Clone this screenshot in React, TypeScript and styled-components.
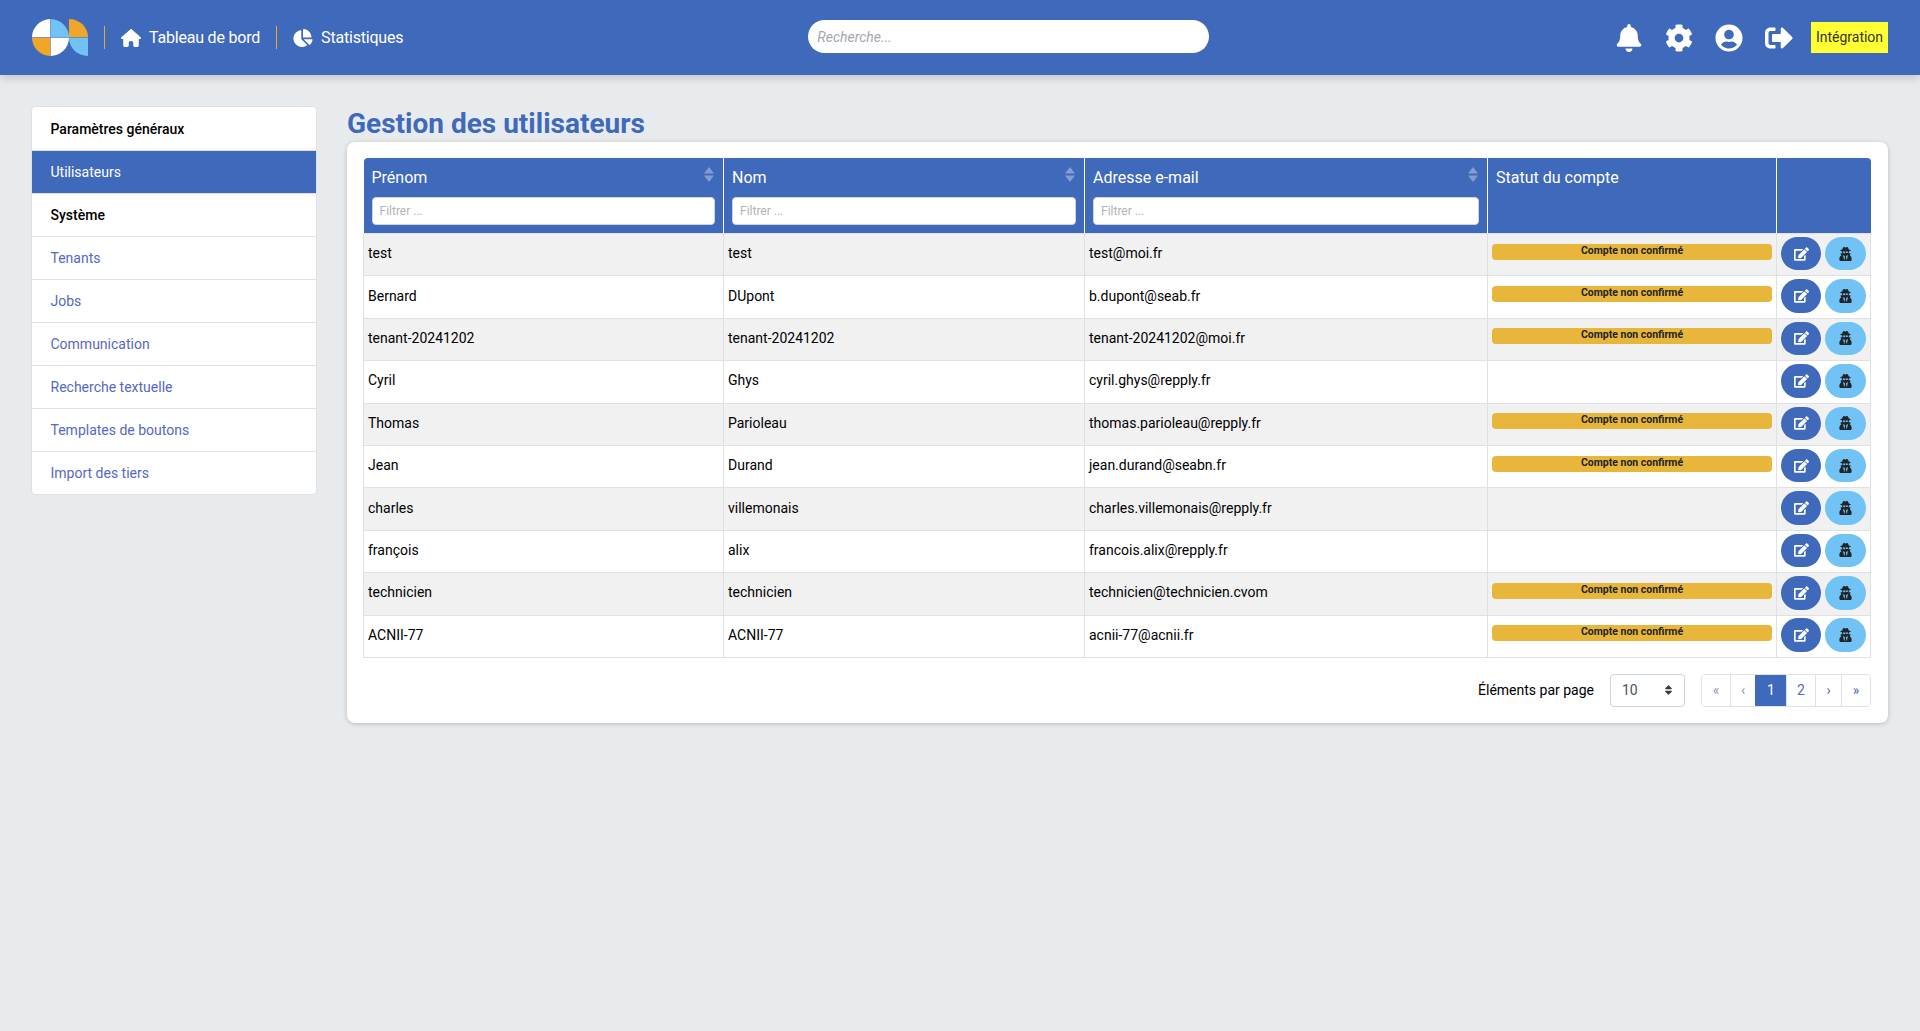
import React from "react";
import styled, { createGlobalStyle } from "styled-components";
import {
  FaChartPie,
  FaBell,
  FaCog,
  FaUserCircle,
  FaSignOutAlt,
  FaEdit,
  FaUserSecret,
  FaSort,
} from "react-icons/fa";
import { FaHouse } from "react-icons/fa6";

const BLUE = "#3f69ba";
const LIGHT_BLUE = "#72c3f5";
const ORANGE = "#f0a728";
const LINE = "#dee2e6";

const GlobalStyle = createGlobalStyle`
  html, body {
    margin: 0;
    padding: 0;
    background: #e8ebee;
    font-family: Roboto, "Liberation Sans", sans-serif;
    font-size: 14px;
    color: #000;
  }
  * { box-sizing: border-box; }
`;

const Page = styled.div`
  min-height: 100vh;
`;

const Header = styled.header`
  height: 75px;
  background: ${BLUE};
  box-shadow: 0 3px 8px rgba(0, 0, 0, 0.16);
  display: flex;
  align-items: center;
  padding: 0 32px;
`;

const Nav = styled.nav`
  display: flex;
  align-items: center;
  margin-left: 16px;
`;

const NavLink = styled.a`
  display: flex;
  align-items: center;
  gap: 8px;
  height: 23px;
  padding: 0 16px;
  border-left: 1px solid ${ORANGE};
  color: #fff;
  font-size: 16px;
  letter-spacing: -0.2px;
  svg {
    width: 20px;
    height: 18px;
    flex: none;
  }
`;

const Search = styled.input`
  width: 401px;
  height: 33px;
  margin-left: 389px;
  margin-top: -2px;
  border: none;
  border-radius: 17px;
  padding: 0 9px;
  background: #fff;
  font-family: inherit;
  font-size: 14px;
  font-style: italic;
  &::placeholder {
    color: #a3a8ae;
    opacity: 1;
  }
`;

const HeaderRight = styled.div`
  margin-left: auto;
  display: flex;
  align-items: center;
  color: #fff;
  svg {
    width: 28px;
    height: 28px;
    margin-right: 22px;
  }
`;

const EnvTag = styled.div`
  width: 77px;
  height: 31px;
  margin-left: -4px;
  margin-top: -1px;
  background: #ffff33;
  color: #333;
  font-size: 14px;
  display: flex;
  align-items: center;
  justify-content: center;
`;

const Main = styled.main`
  display: grid;
  grid-template-columns: 284px 1fr;
  gap: 31px;
  padding: 32px;
  align-items: start;
`;

const Side = styled.aside`
  background: #fff;
  border-radius: 4px;
  box-shadow: 0 0 0 1px #dfe2e5;
`;

const SideItem = styled.div<{ $kind: "title" | "active" | "link" }>`
  height: 43px;
  display: flex;
  align-items: center;
  padding-left: 18.5px;
  font-size: 14px;
  font-weight: ${(p) => (p.$kind === "title" ? 500 : 400)};
  color: ${(p) =>
    p.$kind === "title" ? "#000" : p.$kind === "active" ? "#fff" : "#5568c4"};
  background: ${(p) => (p.$kind === "active" ? BLUE : "transparent")};
  & + & {
    border-top: ${(p) =>
      p.$kind === "link" ? `1px solid ${LINE}` : "none"};
  }
`;

const Title = styled.h1`
  margin: 0 0 3px;
  height: 32px;
  padding-top: 2px;
  font-size: 28px;
  line-height: 30px;
  font-weight: 700;
  color: ${BLUE};
`;

const Card = styled.section`
  background: #fff;
  border-radius: 8px;
  padding: 16px;
  height: 581px;
  box-shadow: 0 1px 5px rgba(0, 0, 0, 0.2);
`;

const Table = styled.table`
  width: 1507px;
  table-layout: fixed;
  border-collapse: collapse;
`;

const Th = styled.th`
  height: 75px;
  background: ${BLUE};
  color: #fff;
  padding: 8px;
  vertical-align: top;
  text-align: left;
  font-size: 16px;
  font-weight: 400;
  border-left: 1px solid #fff;
  &:first-child {
    border-left: none;
    border-top-left-radius: 4px;
  }
  &:last-child {
    border-top-right-radius: 4px;
  }
`;

const ThHead = styled.div`
  display: flex;
  justify-content: space-between;
  height: 31px;
  line-height: 17px;
  padding-top: 3px;
`;

const Sorter = styled.svg`
  width: 10px;
  height: 15px;
  opacity: 0.35;
  margin: -2px 1px 0 0;
`;

const Filter = styled.input`
  display: block;
  width: 100%;
  height: 28px;
  border: 1px solid #ced4da;
  border-radius: 4px;
  padding: 0 7px;
  background: #fff;
  font-family: inherit;
  font-size: 12px;
  &::placeholder {
    color: #b0b5ba;
    opacity: 1;
  }
`;

const Row = styled.tr`
  height: 42.4px;
  &:nth-child(odd) {
    background: #f1f1f2;
  }
`;

const Td = styled.td`
  border: 1px solid ${LINE};
  padding: 0 4px 3px;
  font-size: 14px;
  vertical-align: middle;
  overflow: hidden;
  white-space: nowrap;
`;

const ActionTd = styled(Td)`
  padding: 0 3px 2px 4px;
`;

const Badge = styled.div`
  height: 16px;
  border-radius: 4px;
  background: #e8b63a;
  color: #212529;
  font-size: 10.5px;
  font-weight: 700;
  line-height: 13px;
  text-align: center;
  margin-bottom: 3px;
`;

const Actions = styled.div`
  display: flex;
  gap: 4px;
`;

const RoundButton = styled.button<{ $light?: boolean }>`
  width: ${(p) => (p.$light ? 41 : 40)}px;
  height: 33.5px;
  flex: none;
  border: none;
  border-radius: 17px;
  padding: 0;
  display: flex;
  align-items: center;
  justify-content: center;
  background: ${(p) => (p.$light ? LIGHT_BLUE : BLUE)};
  color: ${(p) => (p.$light ? "#212529" : "#fff")};
  svg {
    width: 15px;
    height: 14px;
  }
`;

const TableFoot = styled.div`
  width: 1508px;
  display: flex;
  justify-content: flex-end;
  align-items: center;
  margin-top: 16px;
`;

const FootLabel = styled.span`
  font-size: 14px;
  margin-right: 16px;
`;

const PageSize = styled.div`
  width: 75px;
  height: 33px;
  border: 1px solid #ced4da;
  border-radius: 4px;
  display: flex;
  align-items: center;
  justify-content: space-between;
  padding: 0 11px;
  color: #495057;
  font-size: 14px;
  margin-right: 16px;
  svg {
    width: 9px;
    height: 12px;
    color: #343a40;
  }
`;

const Pager = styled.div`
  display: flex;
  height: 33px;
  border: 1px solid ${LINE};
  border-radius: 4px;
  overflow: hidden;
`;

const PagerItem = styled.a<{ $w: number; $active?: boolean; $dim?: boolean }>`
  width: ${(p) => p.$w}px;
  display: flex;
  align-items: center;
  justify-content: center;
  font-size: 14px;
  border-left: 1px solid ${(p) => (p.$active ? BLUE : LINE)};
  background: ${(p) => (p.$active ? BLUE : "#fff")};
  color: ${(p) => (p.$active ? "#fff" : p.$dim ? "#8c96b8" : "#5568c4")};
  &:first-child {
    border-left: none;
  }
`;

const Logo = () => (
  <svg width="56" height="37" viewBox="0 0 56 37" style={{ flex: "none" }}>
    <path d="M18.300 18.300V0A18.500 18.500 0 0 0 0 18.300Z" fill="#fff" />
    <path d="M18.700 18.300V0A18.500 18.500 0 0 1 37 18.300Z" fill={LIGHT_BLUE} />
    <path d="M18.300 18.700V37A18.500 18.500 0 0 1 0 18.700Z" fill={ORANGE} />
    <path d="M18.700 18.700V37A18.500 18.500 0 0 0 37 18.700Z" fill="#fff" />
    <path d="M37 0A19 18.300 0 0 1 56 18.300H37Z" fill={ORANGE} />
    <path d="M37 18.700H56V37A19 18.300 0 0 1 37 18.700Z" fill={LIGHT_BLUE} />
  </svg>
);

const SortArrows = () => (
  <Sorter viewBox="0 0 10 15">
    <path d="M5 0L10 6.500H0Z" fill="#fff" />
    <path d="M5 15L0 8.500H10Z" fill="#fff" />
  </Sorter>
);

type User = { first: string; last: string; mail: string; pending: boolean };

const users: User[] = [
  { first: "test", last: "test", mail: "test@moi.fr", pending: true },
  { first: "Bernard", last: "DUpont", mail: "b.dupont@seab.fr", pending: true },
  { first: "tenant-20241202", last: "tenant-20241202", mail: "tenant-20241202@moi.fr", pending: true },
  { first: "Cyril", last: "Ghys", mail: "cyril.ghys@repply.fr", pending: false },
  { first: "Thomas", last: "Parioleau", mail: "thomas.parioleau@repply.fr", pending: true },
  { first: "Jean", last: "Durand", mail: "jean.durand@seabn.fr", pending: true },
  { first: "charles", last: "villemonais", mail: "charles.villemonais@repply.fr", pending: false },
  { first: "françois", last: "alix", mail: "francois.alix@repply.fr", pending: false },
  { first: "technicien", last: "technicien", mail: "technicien@technicien.cvom", pending: true },
  { first: "ACNII-77", last: "ACNII-77", mail: "acnii-77@acnii.fr", pending: true },
];

const menu: { label: string; kind: "title" | "active" | "link" }[] = [
  { label: "Paramètres généraux", kind: "title" },
  { label: "Utilisateurs", kind: "active" },
  { label: "Système", kind: "title" },
  { label: "Tenants", kind: "link" },
  { label: "Jobs", kind: "link" },
  { label: "Communication", kind: "link" },
  { label: "Recherche textuelle", kind: "link" },
  { label: "Templates de boutons", kind: "link" },
  { label: "Import des tiers", kind: "link" },
];

export default function App() {
  return (
    <Page>
      <GlobalStyle />
      <Header>
        <Logo />
        <Nav>
          <NavLink>
            <FaHouse />
            Tableau de bord
          </NavLink>
          <NavLink>
            <FaChartPie />
            Statistiques
          </NavLink>
        </Nav>
        <Search placeholder="Recherche..." />
        <HeaderRight>
          <FaBell />
          <FaCog />
          <FaUserCircle />
          <FaSignOutAlt />
          <EnvTag>Intégration</EnvTag>
        </HeaderRight>
      </Header>
      <Main>
        <Side>
          {menu.map((item) => (
            <SideItem key={item.label} $kind={item.kind}>
              {item.label}
            </SideItem>
          ))}
        </Side>
        <div>
          <Title>Gestion des utilisateurs</Title>
          <Card>
            <Table>
              <colgroup>
                <col style={{ width: 360 }} />
                <col style={{ width: 361 }} />
                <col style={{ width: 403 }} />
                <col style={{ width: 289 }} />
                <col style={{ width: 94 }} />
              </colgroup>
              <thead>
                <tr>
                  {["Prénom", "Nom", "Adresse e-mail"].map((h) => (
                    <Th key={h}>
                      <ThHead>
                        {h}
                        <SortArrows />
                      </ThHead>
                      <Filter placeholder="Filtrer ..." />
                    </Th>
                  ))}
                  <Th>
                    <ThHead>Statut du compte</ThHead>
                  </Th>
                  <Th />
                </tr>
              </thead>
              <tbody>
                {users.map((u) => (
                  <Row key={u.mail}>
                    <Td>{u.first}</Td>
                    <Td>{u.last}</Td>
                    <Td>{u.mail}</Td>
                    <Td>{u.pending && <Badge>Compte non confirmé</Badge>}</Td>
                    <ActionTd>
                      <Actions>
                        <RoundButton>
                          <FaEdit />
                        </RoundButton>
                        <RoundButton $light>
                          <FaUserSecret />
                        </RoundButton>
                      </Actions>
                    </ActionTd>
                  </Row>
                ))}
              </tbody>
            </Table>
            <TableFoot>
              <FootLabel>Éléments par page</FootLabel>
              <PageSize>
                10
                <FaSort />
              </PageSize>
              <Pager>
                <PagerItem $w={28} $dim>«</PagerItem>
                <PagerItem $w={25} $dim>‹</PagerItem>
                <PagerItem $w={31} $active>1</PagerItem>
                <PagerItem $w={29}>2</PagerItem>
                <PagerItem $w={26}>›</PagerItem>
                <PagerItem $w={29}>»</PagerItem>
              </Pager>
            </TableFoot>
          </Card>
        </div>
      </Main>
    </Page>
  );
}
